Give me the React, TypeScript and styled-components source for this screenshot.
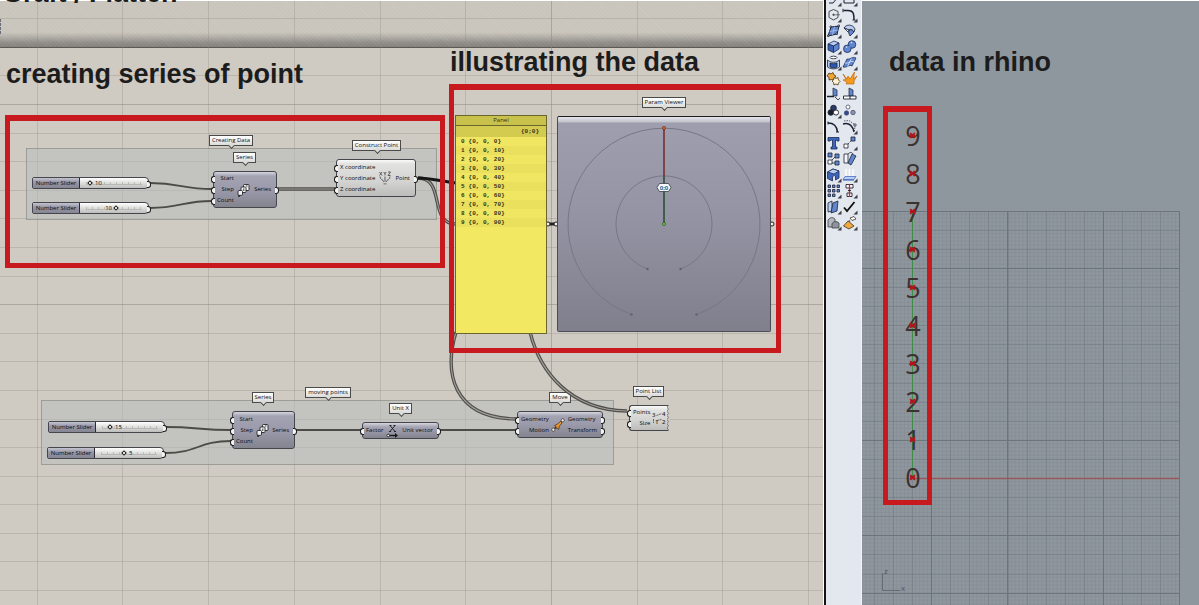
import React, { useId, useState } from "react";
import styled, { createGlobalStyle, css } from "styled-components";

const GlobalStyle = createGlobalStyle`
  * { box-sizing: border-box; }
  body { margin: 0; background: #8f979e; }
`;

const UI_FONT = `"Open Sans", "Noto Sans", sans-serif`;

/* ---------- page ---------- */

const Page = styled.main`
  display: grid;
  grid-template-columns: minmax(0, 1fr) 38px 337px;
  min-height: 100vh;
  font-family: ${UI_FONT};
`;

const Canvas = styled.section`
  position: relative;
  overflow: hidden;
  background: #cfcac2;
  border-right: 1px solid #fff;
`;

const CanvasStrip = styled.header`
  height: 48px;
  border-top: 1px solid #fff;
  border-bottom: 1px solid #5b5856;
  background:
    repeating-linear-gradient(45deg, rgba(255, 255, 255, 0.05) 0 1px, transparent 1px 3px),
    linear-gradient(#c9c5bc 0 68%, #b2aea7 78%, #918e89 90%, #82807b);
`;

const Viewport = styled.section`
  position: relative;
  overflow: hidden;
  background: linear-gradient(#fff, #fff) 0 0 / 100% 1px no-repeat #8f979e;
`;

const Backdrop = styled.svg`
  position: absolute;
  inset: 0;
  width: 100%;
  height: 100%;
  pointer-events: none;
`;

const Heading = styled.h2<{ $x: number; $y: number }>`
  position: absolute;
  left: ${(p) => p.$x}px;
  top: ${(p) => p.$y}px;
  margin: 0;
  font: bold 27px/32px "Liberation Sans", Arial, sans-serif;
  color: #1c1c1c;
  white-space: nowrap;
`;

interface Box {
  $x: number;
  $y: number;
  $w: number;
  $h: number;
}

const placed = css<Box>`
  position: absolute;
  left: ${(p) => p.$x}px;
  top: ${(p) => p.$y}px;
  width: ${(p) => p.$w}px;
  height: ${(p) => p.$h}px;
`;

const Frame = styled.div<Box>`
  ${placed}
  border: solid #c81a1e;
  border-width: 6px 5px 5px;
  pointer-events: none;
`;

const Group = styled.div<Box>`
  ${placed}
  background: rgba(184, 190, 189, 0.5);
  border: 1px solid rgba(120, 118, 112, 0.5);
`;

/* ---------- name tags ---------- */

const TagBox = styled.div<{ $x: number; $y: number; $w: number }>`
  position: absolute;
  left: ${(p) => p.$x}px;
  top: ${(p) => p.$y}px;
  width: ${(p) => p.$w}px;
  height: 11px;
  border: 1px solid #4a4a48;
  background: linear-gradient(#fff, #dcdcda);
  font-size: 6px;
  font-weight: 500;
  line-height: 9px;
  text-align: center;
  white-space: nowrap;
  color: #111;
  &::after {
    content: "";
    position: absolute;
    left: calc(50% - 2px);
    top: 7px;
    width: 4px;
    height: 4px;
    background: #dcdcda;
    border: solid #4a4a48;
    border-width: 0 1px 1px 0;
    transform: rotate(45deg);
  }
`;

const tags: [string, number, number, number][] = [
  ["Creating Data", 209, 135, 44],
  ["Series", 233, 152, 23],
  ["Construct Point", 352, 140, 49],
  ["Param Viewer", 642, 97, 44],
  ["moving points", 305, 387, 46],
  ["Series", 252, 392, 22],
  ["Unit X", 389, 403, 23],
  ["Move", 549, 392, 22],
  ["Point List", 633, 386, 31],
];

/* ---------- components on the canvas ---------- */

type Tone = "grey" | "light";

const NodeBox = styled.article<Box & { $tone: Tone; $torn?: boolean }>`
  ${placed}
  display: flex;
  align-items: center;
  justify-content: space-between;
  border: 1px solid #45454c;
  border-radius: 3px;
  font-size: 6px;
  font-weight: 500;
  line-height: 11px;
  white-space: nowrap;
  color: #0c0c0e;
  background: ${(p) =>
    p.$tone === "grey"
      ? "linear-gradient(#d6d6e0 0, #a3a3b2 4px, #9a9aab 50%, #84848f)"
      : "linear-gradient(#fafafa 0, #e2e2e1 4px, #d3d3d2 60%, #bcbcbb)"};
  ${(p) =>
    p.$torn &&
    css`
      border-right: 0;
      border-radius: 3px 0 0 3px;
    `}
`;

const Ports = styled.ul<{ $side: "in" | "out" }>`
  list-style: none;
  margin: 0;
  padding: ${(p) => (p.$side === "in" ? "0 0 0 3px" : "0 5px 0 0")};
  text-align: ${(p) => (p.$side === "in" ? "right" : "left")};
  position: relative;
`;

const Port = styled.li<{ $side: "in" | "out" }>`
  height: 11px;
  &::before {
    content: "";
    position: absolute;
    ${(p) => (p.$side === "in" ? "left: -3px;" : "right: -3px;")}
    width: 3px;
    height: 5px;
    margin-top: 3px;
    background: #f4f4f4;
    border: 1px solid #1c1c1c;
    ${(p) =>
      p.$side === "in"
        ? "border-right: 0; border-radius: 3px 0 0 3px;"
        : "border-left: 0; border-radius: 0 3px 3px 0;"}
  }
`;

const NodeIcon = styled.svg`
  width: 14px;
  height: 14px;
  flex: none;
`;

interface NodeProps {
  x: number;
  y: number;
  w: number;
  h: number;
  tone?: Tone;
  torn?: boolean;
  inputs: string[];
  outputs?: string[];
  icon: React.ReactNode;
}

function Node({ x, y, w, h, tone = "grey", torn, inputs, outputs, icon }: NodeProps) {
  return (
    <NodeBox $x={x} $y={y} $w={w} $h={h} $tone={tone} $torn={torn}>
      <Ports $side="in">
        {inputs.map((t) => (
          <Port key={t} $side="in">{t}</Port>
        ))}
      </Ports>
      <NodeIcon viewBox="0 0 14 14">{icon}</NodeIcon>
      {outputs && (
        <Ports $side="out">
          {outputs.map((t) => (
            <Port key={t} $side="out">{t}</Port>
          ))}
        </Ports>
      )}
      {torn && (
        <TornEdge viewBox="0 0 4 25" preserveAspectRatio="none">
          <path d="M4 0H2L0 2L2 4L0 6L2 8L0 10L2 12L0 14L2 16L0 18L2 20L0 22L2 24V25H4Z" fill="#cfcac2" />
          <path d="M2 0L0 2L2 4L0 6L2 8L0 10L2 12L0 14L2 16L0 18L2 20L0 22L2 24" fill="none" stroke="#66666a" strokeWidth=".9" />
        </TornEdge>
      )}
    </NodeBox>
  );
}

const TornEdge = styled.svg`
  width: 3px;
  flex: none;
  align-self: stretch;
  margin: -1px 0;
`;

const seriesIcon = (
  <g fill="#f2f2f2" stroke="#26262a" strokeWidth=".9">
    <rect x="6.500" y="1.500" width="5.500" height="6" rx=".8" />
    <rect x="4" y="4" width="5" height="5.500" rx=".8" />
    <path d="M9 3h1.500M6.800 5.500v2.500" />
    <rect x="1" y="7.500" width="4.500" height="4.800" rx="1" />
    <path d="M1 13h2" strokeWidth="1.300" />
  </g>
);

const constructIcon = (
  <g fill="none" stroke="#505155" strokeWidth=".9">
    <path d="M1.500 1l2.500 3.500M4 1l-2.500 3.500M5.800 1l1.200 1.800l1.200-1.800M7 2.800v1.700M10 1h2.500l-2.500 3.500h2.500" />
    <path d="M2 5.500c0 3.500 3 2.500 4 5.500M12 5.500c0 3.500-3 2.500-4 5.500M7 5.500v5" />
    <path d="M5.500 12.800h3" stroke="#8d8d90" strokeWidth="1.500" />
  </g>
);

const unitIcon = (
  <g fill="none" stroke="#17171a">
    <path d="M4 1.500l5 6M9 1.500l-5 6M3.500 1.500h2M7.500 1.500h2M3 7.500h2M8 7.500h2" strokeWidth=".9" />
    <path d="M3 11.500h7" strokeWidth="1.400" />
    <path d="M9 9l3 2.500l-3 2.500z" fill="#17171a" stroke="none" />
    <circle cx="2.200" cy="11.500" r="1.300" fill="#f0f0f0" strokeWidth=".8" />
  </g>
);

const moveIcon = (
  <g stroke="#3a3028" strokeWidth=".7">
    <path d="M2 12L12 2" strokeWidth="1.200" />
    <path d="M3.500 7.500l3-1.500l3-2.500l1.500 1.500l-2.500 3l-1 3.500l-1-1.500l-2 .5l.8-1.800z" fill="#f0962a" />
    <circle cx="2.300" cy="11.700" r="1.600" fill="#eee" />
    <circle cx="11.700" cy="2.300" r="1.600" fill="#eee" />
  </g>
);

const Digit = styled.text`
  font: 600 6px ${UI_FONT};
  fill: #2e2e2e;
`;

const listIcon = (
  <g fill="none" stroke="#444" strokeWidth=".8">
    <path d="M4.500 4.500L9.500 2.500M1.500 8v4M5 9.500L9.500 8.500" strokeDasharray="2 .6" />
    <Digit x="0" y="6" stroke="none">3</Digit>
    <Digit x="10" y="5" stroke="none">4</Digit>
    <Digit x="10" y="13" stroke="none">2</Digit>
    <Digit x="3" y="13" stroke="none">1</Digit>
  </g>
);

/* ---------- number sliders ---------- */

const SliderBox = styled.div<{ $x: number; $y: number }>`
  position: absolute;
  left: ${(p) => p.$x}px;
  top: ${(p) => p.$y}px;
  display: flex;
  width: 117px;
  height: 12px;
  border: 1px solid #45454c;
  border-radius: 2px 4px 4px 2px;
  background: linear-gradient(#fff, #dededc 50%, #bdbdbb);
  font-size: 6px;
  font-weight: 500;
  line-height: 10px;
  color: #0c0c0e;
  &::after {
    content: "";
    position: absolute;
    right: -3px;
    top: 3px;
    width: 3px;
    height: 5px;
    background: #f4f4f4;
    border: 1px solid #1c1c1c;
    border-left: 0;
    border-radius: 0 3px 3px 0;
  }
`;

const SliderLabel = styled.label`
  flex: 0 0 47px;
  text-align: center;
  white-space: nowrap;
  border-right: 1px solid #2c2c30;
  background: linear-gradient(#c4c4d0, #9797a8 40%, #858593);
`;

const Track = styled.div`
  position: relative;
  flex: 0 0 62px;
  margin-left: 3px;
`;

const Range = styled.input`
  appearance: none;
  display: block;
  width: 62px;
  height: 10px;
  margin: 0;
  background:
    repeating-linear-gradient(90deg, rgba(110, 110, 110, 0.3) 0 1px, transparent 1px 6px) 3px 4px / 56px 2px no-repeat,
    linear-gradient(rgba(120, 120, 120, 0.3), rgba(120, 120, 120, 0.3)) 3px 6px / 56px 1px no-repeat;
  &::-webkit-slider-thumb {
    appearance: none;
    width: 4px;
    height: 4px;
    border: 1px solid #111;
    background: #fff;
    transform: rotate(45deg);
  }
`;

const Value = styled.output<{ $before?: boolean }>`
  position: absolute;
  top: 0;
  ${(p) => (p.$before ? "transform: translateX(-100%); margin-left: -2px;" : "margin-left: 7px;")}
  pointer-events: none;
`;

interface SliderProps {
  x: number;
  y: number;
  initial: number;
  max: number;
  before?: boolean;
}

function NumberSlider({ x, y, initial, max, before }: SliderProps) {
  const id = useId();
  const [value, setValue] = useState(initial);
  return (
    <SliderBox $x={x} $y={y}>
      <SliderLabel htmlFor={id}>Number Slider</SliderLabel>
      <Track>
        <Range
          id={id}
          type="range"
          min={0}
          max={max}
          value={value}
          onChange={(e) => setValue(Number(e.target.value))}
        />
        <Value htmlFor={id} $before={before} style={{ left: `${Math.round((value / max) * 58)}px` }}>
          {value}
        </Value>
      </Track>
    </SliderBox>
  );
}

/* ---------- data panel ---------- */

const Panel = styled.article<Box>`
  ${placed}
  border: 1px solid #6b672c;
  background: #f3e862;
  color: #35321a;
`;

const PanelTitle = styled.h3`
  margin: 0;
  height: 10px;
  border-bottom: 1px solid #6b672c;
  background: #c8c24c;
  font-size: 6px;
  font-weight: 500;
  line-height: 8px;
  text-align: center;
`;

const PanelPath = styled.div`
  height: 11px;
  padding-right: 7px;
  background: #d3ca50;
  font: bold 6px/11px "Liberation Mono", monospace;
  text-align: right;
`;

const PanelRows = styled.ol`
  list-style: none;
  margin: 0;
  padding: 0;
  font: bold 6px/9px "Liberation Mono", monospace;
`;

const PanelRow = styled.li`
  display: flex;
  gap: 4px;
  height: 9px;
  padding-left: 5px;
  &:nth-child(odd) {
    background: #f1e661;
  }
  &:nth-child(even) {
    background: #eae05d;
  }
`;

const points = Array.from({ length: 10 }, (_, i) => `{0, 0, ${i * 10}}`);

/* ---------- param viewer ---------- */

const Viewer = styled.article<Box>`
  ${placed}
  border: 1px solid #4b4b55;
  border-top: 1px solid #1d1d20;
  border-radius: 2px;
  background: linear-gradient(#e4e4ea 0, #c2c2cc 5px, #9e9eae 6px, #9494a4 45%, #7f808c);
`;

const ViewerDrawing = styled.svg`
  display: block;
  width: 100%;
  height: 100%;
`;

const NodeText = styled.text`
  font: bold 6px ${UI_FONT};
  fill: #2f6688;
  text-anchor: middle;
`;

function ParamViewer() {
  return (
    <Viewer $x={557} $y={116} $w={214} $h={216}>
      <ViewerDrawing viewBox="0 0 212 214">
        <g fill="none" stroke="#777785" strokeWidth="1">
          <path d="M73.500 197.500A96 96 0 1 1 138.500 197.500" />
          <path d="M89.500 152A48 48 0 1 1 122.500 152" />
        </g>
        <g fill="#62626f">
          <circle cx="73.500" cy="197.500" r="1.200" />
          <circle cx="138.500" cy="197.500" r="1.200" />
          <circle cx="89.500" cy="152" r="1.200" />
          <circle cx="122.500" cy="152" r="1.200" />
        </g>
        <path d="M106 11V59" stroke="#7c2b31" strokeWidth="1.600" />
        <path d="M106 59V106" stroke="#2c4f36" strokeWidth="1.600" />
        <circle cx="106" cy="11" r="1.600" fill="#e0662e" stroke="#6b2a1a" strokeWidth=".7" />
        <circle cx="106" cy="107" r="1.600" fill="#6fbf3c" stroke="#285a1d" strokeWidth=".7" />
        <path d="M99 70.500L101.500 66.500H110.500L113 70.500L110.500 74.500H101.500Z" fill="#f6f8fa" stroke="#3a3a42" strokeWidth=".8" />
        <NodeText x="106" y="73">0;0</NodeText>
      </ViewerDrawing>
    </Viewer>
  );
}

/* ---------- wires ---------- */

const Wires = styled(Backdrop)`
  fill: none;
`;

const singleWires = [
  "M150 183C180 183 183 189 212 189",
  "M150 208C180 208 183 201 212 201",
  "M166 427C196 427 200 430 231 430",
  "M165 453C198 453 198 441 231 441",
  "M296 430H361",
  "M440 430H516",
];

const doubleWires = [
  "M278 189H335",
  "M418 178C446 178 428 224 456 224",
  "M456 332C444 372 452 418 516 419",
  "M530 332C540 372 570 410 627 411",
];

/* ---------- rhino toolbar ---------- */

const Toolbar = styled.nav`
  display: grid;
  grid-template-columns: 16px 16px;
  grid-auto-rows: 16px;
  align-content: start;
  overflow: hidden;
  border-left: 2px solid #141416;
  border-right: 1px solid #f3f5f9;
  background: #e3e7ee;
  max-height: 100vh;
`;

const ToolButton = styled.button`
  appearance: none;
  border: 0;
  padding: 0;
  margin-top: -9px;
  height: 16px;
  background: none;
  display: block;
`;

const ToolSvg = styled.svg`
  display: block;
  width: 16px;
  height: 16px;
`;

const Corner = () => <path d="M15.500 11.500V15.500H11.500Z" fill="#3c3f46" />;

const blue = "#5f86cf";
const pale = "#b9cdf0";
const ink = "#1b2133";

const tools: { name: string; corner?: boolean; art: React.ReactNode }[] = [
  { name: "Curve", corner: true, art: <path d="M3 12L7 12L13 5" fill="none" stroke={ink} /> },
  { name: "Rectangle", corner: true, art: <path d="M2 6V12H12V6" fill="none" stroke={ink} /> },
  {
    name: "Polygon",
    corner: true,
    art: (
      <g fill="none" stroke="#4a4d54">
        <path d="M3 4.500L7.500 2.500L12 4.500V10.500L7.500 13L3 10.500Z" />
        <circle cx="7.500" cy="7.800" r=".7" fill="#33363d" />
        <path d="M8 7.800H14" strokeWidth=".7" />
      </g>
    ),
  },
  {
    name: "Fillet curves",
    corner: true,
    art: (
      <g fill="none" stroke={ink}>
        <path d="M1.500 3.500H6C11 3.500 12 6 12 13" strokeWidth="1.500" />
        <path d="M1 1.800V5.200M10.500 13H13.500" />
      </g>
    ),
  },
  {
    name: "Surface from points",
    corner: true,
    art: (
      <g stroke={ink}>
        <path d="M5 4L13 3L11 11L2 13Z" fill={blue} />
        <path d="M8.500 3.500L6.500 12M3.500 8.500L12 7" stroke={pale} strokeWidth=".7" />
        <path d="M4 3h1.500v1.500h-1.500zM12 2h1.500v1.500h-1.500zM10 10h1.500v1.500h-1.500zM1.500 12h1.500v1.500h-1.500z" fill="#fff" strokeWidth=".7" />
      </g>
    ),
  },
  {
    name: "Curved surface",
    corner: true,
    art: (
      <g stroke={ink} strokeWidth=".8">
        <path d="M2 5C4 1 11 1 13 6L12 9C10 6 8 6 7 7Z" fill={pale} />
        <path d="M7 7C9 6 11 7 12 9L8 13C7 11 6 9 7 7Z" fill={blue} />
        <path d="M2 5L7 7L6 9Z" fill="#f0f5ff" />
      </g>
    ),
  },
  {
    name: "Box",
    corner: true,
    art: (
      <g stroke="#1d2c5c" strokeWidth=".8">
        <path d="M2 5L8 2L13 4L7.500 7Z" fill={pale} />
        <path d="M2 5L7.500 7V13.500L2 11Z" fill="#3c60ad" />
        <path d="M7.500 7L13 4V10L7.500 13.500Z" fill={blue} />
      </g>
    ),
  },
  {
    name: "Union",
    corner: true,
    art: (
      <g stroke="#1d2c5c" strokeWidth=".8">
        <circle cx="10" cy="5.500" r="3.800" fill={blue} />
        <circle cx="5.300" cy="9.800" r="3.800" fill={blue} />
        <path d="M7 7L8.500 8.500" stroke={blue} strokeWidth="4" />
        <path d="M4 8.500L5 7.800M9 3.800L10 3.200" stroke="#dfe9ff" strokeWidth="1.400" />
      </g>
    ),
  },
  {
    name: "Cylinder wrap",
    corner: true,
    art: (
      <g fill="none" stroke={ink} strokeWidth=".8">
        <ellipse cx="7.500" cy="2.500" rx="3.500" ry="1.300" fill="#fff" />
        <path d="M1.500 5C5 8 10 8 13.500 5V12C10 14.500 5 14.500 1.500 12Z" fill={pale} />
        <path d="M4 8C6 9 9 9 11 8V12C9 13 6 13 4 12Z" fill="#2c56b8" />
      </g>
    ),
  },
  {
    name: "Patch",
    corner: true,
    art: (
      <g stroke="#1d2c5c" strokeWidth=".8">
        <path d="M5 4C8 5 10 1 14 3L10 11C7 9 5 13 1 12Z" fill={blue} />
        <path d="M3 8C6 9 9 5 12 7M9.500 3.500L5.500 11.500" stroke="#dfe9ff" fill="none" />
      </g>
    ),
  },
  {
    name: "Options",
    art: (
      <g stroke="#4b3210" strokeWidth=".8">
        <path d="M3 2L5 3L7 1.500L8 4L10 5L8.500 7L8 9L5.500 8.500L3 9L3 6.500L1 5Z" fill="#f0a636" />
        <path d="M8 6.500L10 7.500L12 6.500L12.500 9L14 10.500L12.500 12L12 14L10 13L8 14L7.500 11.500L6 10L7.500 9Z" fill="#fff2d4" />
      </g>
    ),
  },
  {
    name: "Explode",
    art: <path d="M1 3L5 8L6 5L8 8L12.500 1L11.500 8L15 5L12 10L12 13H4L5 11L1 9L4 8.500Z" fill="#f39a1f" stroke="#c26a0c" strokeWidth=".7" />,
  },
  {
    name: "Trim",
    art: (
      <g stroke={ink}>
        <path d="M7 1L11 3V9H7Z" fill={blue} strokeWidth=".7" />
        <path d="M1 9.500H8" strokeWidth="1.500" />
        <path d="M9 10L12 13L14 11" fill="none" strokeWidth=".8" />
      </g>
    ),
  },
  {
    name: "Split",
    art: (
      <g stroke={ink}>
        <path d="M7 1L11 3V9H7Z" fill={blue} strokeWidth=".7" />
        <path d="M1.500 9H14V12H1.500Z" fill="#fff" strokeWidth=".9" />
        <path d="M8 9V12" />
      </g>
    ),
  },
  {
    name: "Group",
    corner: true,
    art: (
      <g stroke={ink} strokeWidth=".9">
        <circle cx="7.500" cy="5" r="2.800" fill="#2c3b66" />
        <circle cx="4.800" cy="9.500" r="2.800" fill="#1c1f2a" />
        <circle cx="10" cy="9.500" r="2.600" fill="#fff" />
      </g>
    ),
  },
  {
    name: "Ungroup",
    art: (
      <g stroke="#4a5068" strokeWidth=".8">
        <circle cx="6" cy="4" r="2" fill="#fff" />
        <circle cx="4.500" cy="10" r="2.200" fill="#2c4a9a" />
        <circle cx="11" cy="9.500" r="2.200" fill="#8a94b8" />
      </g>
    ),
  },
  {
    name: "Edit points",
    art: (
      <g fill="none" stroke={ink}>
        <path d="M2 4C8 4 11 8 11.500 13" strokeWidth="1.400" />
        <path d="M2 2.500V5.500M10 13H13" />
      </g>
    ),
  },
  {
    name: "Control points",
    corner: true,
    art: (
      <g fill="none" stroke={ink}>
        <path d="M1 5C8 3 11 8 12 13" strokeWidth="1.400" />
        <path d="M2 2L7 1.500L13 6L12.500 12" strokeWidth=".7" strokeDasharray="1.500 1" />
        <path d="M12 5h2v2h-2z" fill="#fff" strokeWidth=".7" />
      </g>
    ),
  },
  {
    name: "Text",
    art: <path d="M2 2.500H13V6H11L10.500 5H9.500V12H11V14H5V12H6.500V5H5L4 6H2Z" fill="#3f68bd" stroke="#1a2a56" strokeWidth=".8" />,
  },
  {
    name: "Move",
    corner: true,
    art: (
      <g stroke={ink} strokeWidth=".8">
        <path d="M9 2h4v4h-4z" fill={blue} />
        <path d="M2 9h4v4h-4z" fill="#fff" />
        <path d="M6 9L9 6" strokeDasharray="1.500 1" />
      </g>
    ),
  },
  {
    name: "Copy",
    art: (
      <g stroke={ink} strokeWidth=".8">
        <path d="M2 2h4v4h-4zM9 3h4v4h-4zM9 10h4v4h-4z" fill={blue} />
        <path d="M2 9h4v4h-4z" fill="#fff" />
        <path d="M6 9L9 6M6 12H9" />
      </g>
    ),
  },
  {
    name: "Rotate",
    art: (
      <g stroke={ink} strokeWidth=".8">
        <path d="M2 3h4v9h-4z" fill="#f4f6fb" />
        <path d="M10 3L14 5L9 14L6 12Z" fill={blue} />
        <path d="M6 3C8 1 10 1 11 3" fill="none" />
      </g>
    ),
  },
  {
    name: "Boolean",
    corner: true,
    art: (
      <g stroke="#1d2c5c" strokeWidth=".8">
        <path d="M1.500 5L7 2L13 4V11L9.500 13V9C8 8 6.500 9 6.500 11V14L1.500 11.500Z" fill="#3e66b8" />
        <path d="M1.500 5L7 2L13 4L8 7Z" fill={pale} />
      </g>
    ),
  },
  {
    name: "Project",
    corner: true,
    art: (
      <g stroke="#4b6fc0">
        <path d="M4 2V9M7.500 2V9M11 2V9" stroke="#fff" strokeWidth="1.300" />
        <path d="M3 9.500H14L12 12.500H1Z" fill={pale} strokeWidth=".8" />
        <path d="M1 13H12" strokeWidth="1.200" />
      </g>
    ),
  },
  {
    name: "Array",
    corner: true,
    art: (
      <path
        d="M2 2h2.500v2.500h-2.500zM6.500 2h2.500v2.500h-2.500zM11 2h2.500v2.500h-2.500zM2 6.500h2.500v2.500h-2.500zM6.500 6.500h2.500v2.500h-2.500zM11 6.500h2.500v2.500h-2.500zM2 11h2.500v2.500h-2.500zM6.500 11h2.500v2.500h-2.500z"
        fill={blue}
        stroke={ink}
        strokeWidth=".8"
      />
    ),
  },
  {
    name: "Align",
    corner: true,
    art: (
      <g stroke={ink} strokeWidth=".9">
        <path d="M4 1.500h7v3.500h-7zM5 10h5v3.500h-5z" fill="#fff" />
        <path d="M7.500 1V14" stroke="#d3262b" strokeWidth="1.300" />
        <path d="M6 7.500H9" />
      </g>
    ),
  },
  {
    name: "Layers",
    corner: true,
    art: (
      <g stroke={ink} strokeWidth=".8">
        <path d="M2 4L6 2V12L2 13Z" fill={pale} />
        <path d="M7 4L12 2L11 12L5 14Z" fill={blue} />
      </g>
    ),
  },
  {
    name: "Check",
    corner: true,
    art: <path d="M2 8.500L5 12L12.500 3" fill="none" stroke="#111" strokeWidth="1.800" />,
  },
  {
    name: "Solids",
    corner: true,
    art: (
      <g stroke="#3c4048" strokeWidth=".8">
        <path d="M2 5C4 2 7 2 9 4V12L2 12Z" fill="#b4b8be" />
        <path d="M6 9C7 6 11 6 13 8V13H6Z" fill="#8e939b" />
      </g>
    ),
  },
  {
    name: "Render",
    corner: true,
    art: (
      <g stroke="#3c3424" strokeWidth=".8">
        <path d="M1.500 11L6 6L12 11L7 14Z" fill="#f2a83e" />
        <path d="M8 3L12 1.500L14 4L10 5.500Z" fill="#fff" />
        <path d="M7 5L8 7" />
      </g>
    ),
  },
];

/* ---------- viewport ---------- */

const Labels = styled.ol`
  position: absolute;
  left: 38px;
  top: 117px;
  list-style: none;
  margin: 0;
  padding: 0;
`;

const Label = styled.li`
  position: relative;
  width: 26px;
  height: 38px;
  font: 400 27px/38px "Open Sans", "Noto Sans", sans-serif;
  text-align: center;
  color: #3a3231;
`;

const Mark = styled.svg`
  position: absolute;
  left: 9px;
  top: 15px;
  width: 7px;
  height: 7px;
`;

const AxisText = styled.text`
  font: 8px "Liberation Sans", Arial, sans-serif;
  fill: #50575d;
`;

const STEP = 19.1;
const AXIS_X = 50;
const AXIS_Y = 478;
const RIGHT = 317;
const TOP = 211;
const range = (from: number, to: number) => Array.from({ length: to - from + 1 }, (_, i) => from + i);

function RhinoGrid() {
  const minorX = range(-13, 69).map((i) => AXIS_X + (i * STEP) / 5);
  const minorY = range(-69, 80).map((i) => AXIS_Y + (i * STEP) / 5);
  const midX = range(-2, 13).map((i) => Math.round(AXIS_X + i * STEP));
  const midY = range(-14, 18).map((i) => Math.round(AXIS_Y + i * STEP));
  return (
    <Backdrop>
      <g stroke="#7b848c" strokeOpacity=".32">
        <path d={minorX.map((x) => `M${x.toFixed(1)} ${TOP}V2000`).join("")} />
        <path d={minorY.map((y) => `M0 ${y.toFixed(1)}H${RIGHT}`).join("")} />
      </g>
      <g stroke="#737b83" strokeOpacity=".6">
        <path d={midX.map((x) => `M${x}.5 ${TOP}V2000`).join("")} />
        <path d={midY.map((y) => `M0 ${y}.5H${RIGHT}`).join("")} />
      </g>
      <g stroke="#6d757c">
        <path d={[69, 145, 241, RIGHT].map((x) => `M${x}.5 ${TOP}V2000`).join("")} />
        <path d={[TOP, 268, 440, 535, 593].map((y) => `M0 ${y}.5H${RIGHT}`).join("")} />
      </g>
      <path d={`M50.500 478.500H${RIGHT}`} stroke="#96595c" strokeWidth="1.500" />
      <path d="M50.500 211V478" stroke="#3f8c49" />
      <path d="M20.500 573V590.500H38" fill="none" stroke="#646b71" />
      <AxisText x="22" y="574">z</AxisText>
      <AxisText x="39" y="591">x</AxisText>
    </Backdrop>
  );
}

const gridX = [37, 122, 208, 294, 380, 465, 551, 637, 722, 808, 894, 980, 1065, 1151];
const gridY = [18, 75, 104, 133, 161, 190, 218, 247, 276, 304, 333, 361, 390, 419, 447, 476, 504, 533, 561, 590, 618];

export default function App() {
  return (
    <Page>
      <GlobalStyle />
      <Canvas>
        <CanvasStrip />
        <Backdrop>
          <path d={gridX.map((x) => `M${x}.5 1V2000`).join("")} stroke="#8c877e" strokeOpacity=".3" />
          <path d={gridY.map((y) => `M0 ${y}.5H3000`).join("")} stroke="#8c877e" strokeOpacity=".3" />
          <path d="M551.500 1V2000M0 104.500H3000M0 304.500H3000" stroke="#8c877e" strokeOpacity=".3" />
          <path d="M.500 19V34" stroke="#6c6c78" strokeDasharray="3 1" />
        </Backdrop>

        <Heading $x={2} $y={-23}>Graft / Flatten</Heading>
        <Heading $x={6} $y={58}>creating series of point</Heading>
        <Heading $x={450} $y={46}>illustrating the data</Heading>

        <Group $x={26} $y={148} $w={411} $h={72} />
        <Group $x={41} $y={400} $w={573} $h={65} />

        {tags.map(([text, x, y, w]) => (
          <TagBox key={`${text}${x}`} $x={x} $y={y} $w={w}>{text}</TagBox>
        ))}

        <Wires>
          {singleWires.map((d) => (
            <path key={d} d={d} stroke="#4d4b47" strokeWidth="1.800" />
          ))}
          {doubleWires.map((d) => (
            <g key={d}>
              <path d={d} stroke="#504e4a" strokeWidth="3.400" />
              <path d={d} stroke="#a19f99" strokeWidth="1.100" />
            </g>
          ))}
          <path d="M418 178C430 178 440 181 456 183" stroke="#151515" strokeWidth="3" />
          <path d="M549 224H556" stroke="#222" strokeWidth="3" />
          <g fill="#f4f4f4" stroke="#1c1c1c">
            <circle cx="548" cy="224" r="2" />
            <circle cx="556" cy="224" r="2" />
            <circle cx="772" cy="224" r="2" />
          </g>
        </Wires>

        <NumberSlider x={32} y={177} initial={10} max={110} />
        <NumberSlider x={32} y={202} initial={10} max={19} before />
        <NumberSlider x={48} y={421} initial={15} max={100} />
        <NumberSlider x={47} y={447} initial={5} max={12} />

        <Node x={213} y={171} w={64} h={37} inputs={["Start", "Step", "Count"]} outputs={["Series"]} icon={seriesIcon} />
        <Node
          x={336}
          y={159}
          w={80}
          h={38}
          tone="light"
          inputs={["X coordinate", "Y coordinate", "Z coordinate"]}
          outputs={["Point"]}
          icon={constructIcon}
        />
        <Node x={232} y={411} w={63} h={38} inputs={["Start", "Step", "Count"]} outputs={["Series"]} icon={seriesIcon} />
        <Node x={362} y={422} w={77} h={17} inputs={["Factor"]} outputs={["Unit vector"]} icon={unitIcon} />
        <Node
          x={517}
          y={411}
          w={86}
          h={27}
          inputs={["Geometry", "Motion"]}
          outputs={["Geometry", "Transform"]}
          icon={moveIcon}
        />
        <Node x={629} y={405} w={41} h={26} tone="light" torn inputs={["Points", "Size"]} icon={listIcon} />

        <Panel $x={455} $y={115} $w={92} $h={219}>
          <PanelTitle>Panel</PanelTitle>
          <PanelPath>{"{0;0}"}</PanelPath>
          <PanelRows>
            {points.map((p, i) => (
              <PanelRow key={p}>
                <span>{i}</span>
                <span>{p}</span>
              </PanelRow>
            ))}
          </PanelRows>
        </Panel>
        <ParamViewer />

        <Frame $x={5} $y={115} $w={440} $h={153} />
        <Frame $x={449} $y={84} $w={332} $h={269} />
      </Canvas>

      <Toolbar>
        {tools.map((t) => (
          <ToolButton key={t.name} type="button" aria-label={t.name}>
            <ToolSvg viewBox="0 0 16 16">
              {t.art}
              {t.corner && <Corner />}
            </ToolSvg>
          </ToolButton>
        ))}
      </Toolbar>

      <Viewport>
        <RhinoGrid />
        <Heading $x={27} $y={46}>data in rhino</Heading>
        <Labels>
          {range(0, 9).map((i) => (
            <Label key={i}>
              {9 - i}
              <Mark viewBox="0 0 6 6">
                <path d="M1 1L5 5M5 1L1 5M1 3H5" stroke="#b3141a" strokeWidth="1.600" />
              </Mark>
            </Label>
          ))}
        </Labels>
        <Frame $x={21} $y={106} $w={49} $h={399} />
      </Viewport>
    </Page>
  );
}
